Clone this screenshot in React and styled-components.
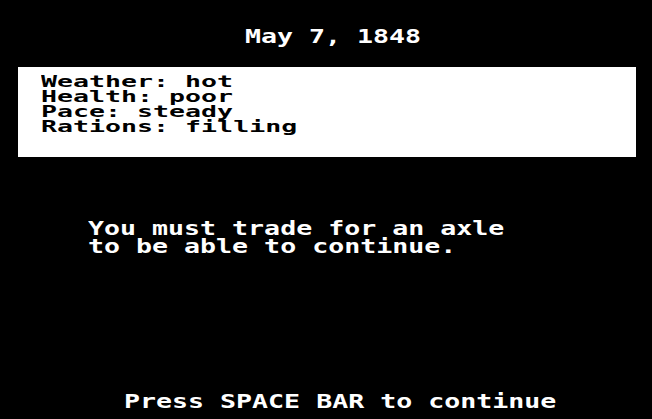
import React from "react";
import styled, { createGlobalStyle } from "styled-components";

const GlobalStyle = createGlobalStyle`
html, body {
  margin: 0;
  padding: 0;
  background: #000;
}
`

const Screen = styled.div`
width: 652px;
height: 419px;
background: #000;
color: #fff;
font-family: "DejaVu Sans Mono", "Liberation Mono", monospace;
font-weight: bold;
font-size: 26.6px;
display: flex;
flex-direction: column;
overflow: hidden;
`
// one line of the pixel font, squashed vertically
const Line = styled.div`
height: ${(p) => p.$h || 18}px;
line-height: ${(p) => p.$h || 18}px;
white-space: pre;
span {
    display: inline-block;
    transform: scaleY(${(p) => p.$squash || 0.74});
    transform-origin: 50% 50%;
}
`
const DateLine = styled(Line)`
margin-top: 26.5px;
padding-left: 245px;
`
const StatusBox = styled.div`
margin-top: 22.5px;
margin-left: 18px;
width: 618px;
height: 90px;
box-sizing: border-box;
padding: 6.6px 0 0 23px;
background: #fff;
color: #000;
display: flex;
flex-direction: column;
`
const Message = styled.div`
margin-top: 61.5px;
padding-left: 88px;
display: flex;
flex-direction: column;
`
const Footer = styled(Line)`
margin-top: auto;
margin-bottom: 9.5px;
padding-left: 124px;
`

function App(){
    const status = [
        "Weather: hot",
        "Health: poor",
        "Pace: steady",
        "Rations: filling",
    ]
    return(
        <>
        <GlobalStyle/>
        <Screen>
            <DateLine><span>May 7, 1848</span></DateLine>
            <StatusBox>
                {status.map((s) => (
                    <Line key={s} $h={15.3} $squash={0.6}><span>{s}</span></Line>
                ))}
            </StatusBox>
            <Message>
                <Line><span>You must trade for an axle</span></Line>
                <Line><span>to be able to continue.</span></Line>
            </Message>
            <Footer><span>Press SPACE BAR to continue</span></Footer>
        </Screen>
        </>
    )
}
export default App;
